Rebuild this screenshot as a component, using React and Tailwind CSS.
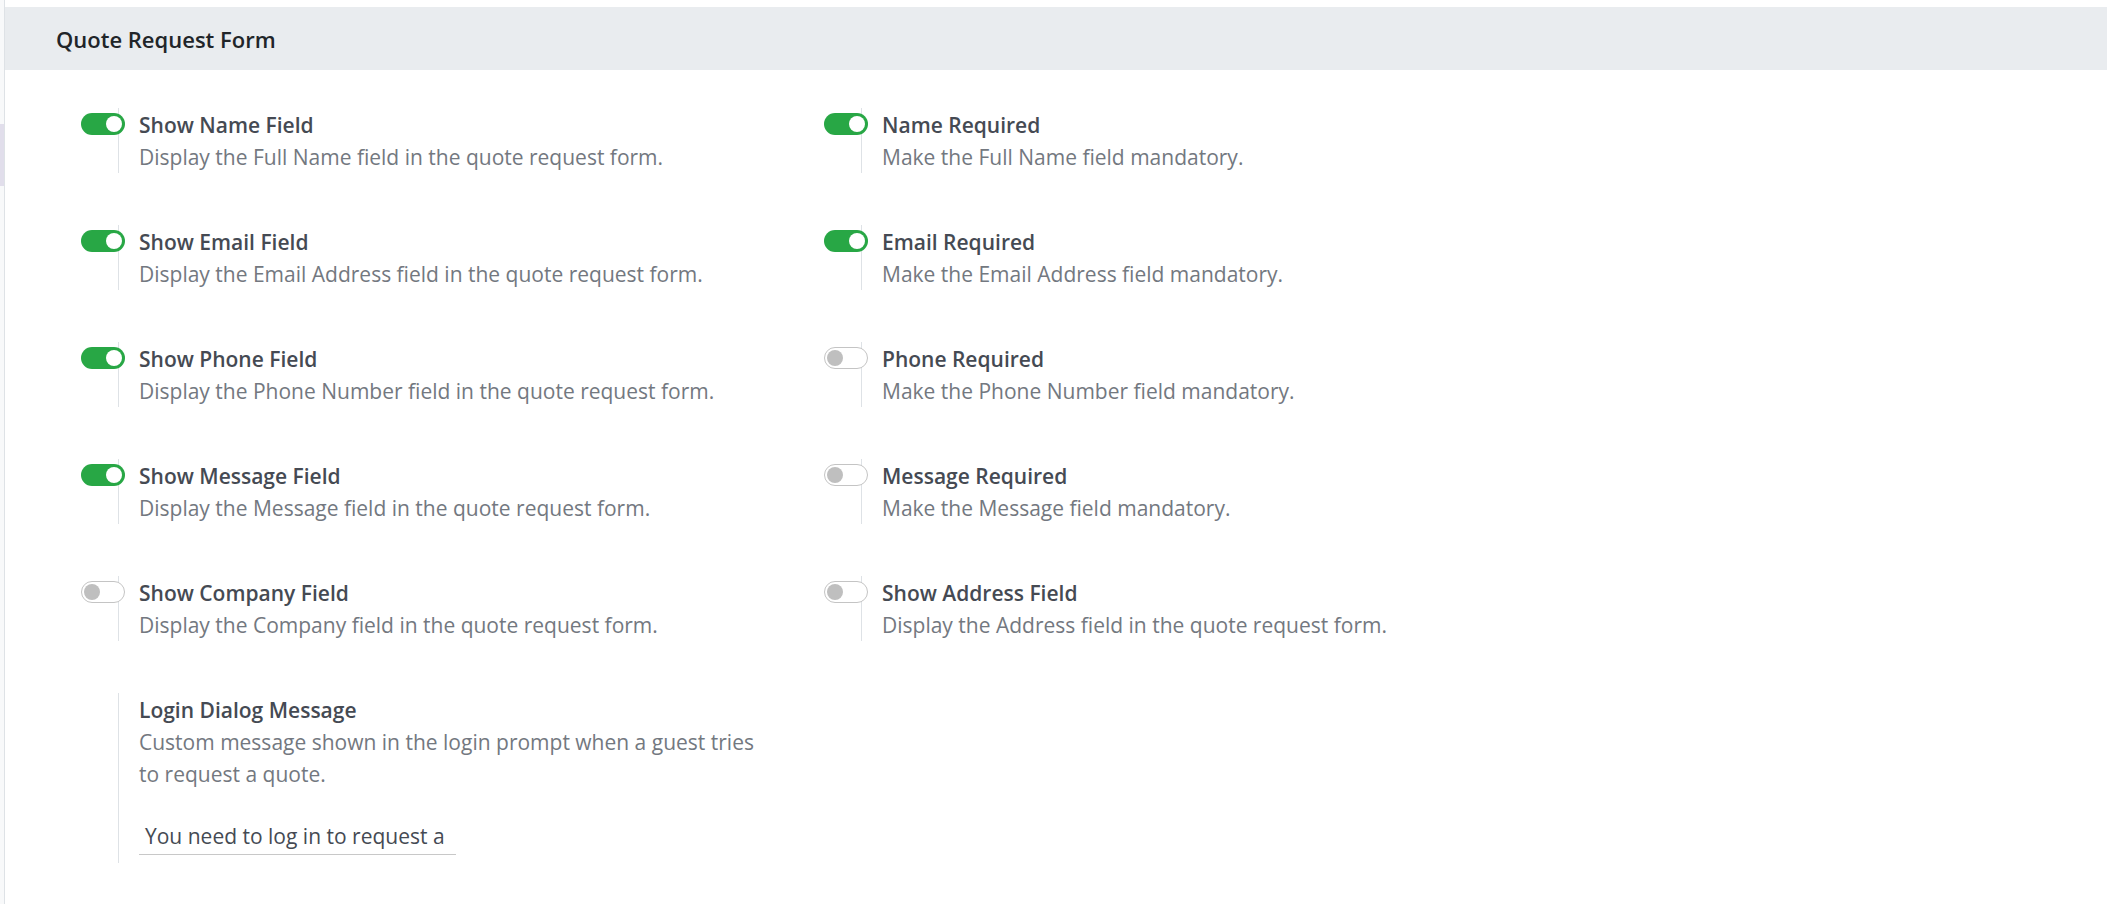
import React from "react";

function Toggle({ on }) {
  if (on) {
    return (
      <div className="relative z-10 flex h-[22px] w-[44px] items-center justify-end rounded-full bg-[#28a745] pr-[3px]">
        <div className="h-[16px] w-[16px] rounded-full bg-white" />
      </div>
    );
  }
  return (
    <div className="relative z-10 flex h-[22px] w-[44px] items-center justify-start rounded-full border border-[#c4c4c4] bg-white pl-[2px]">
      <div className="h-[16px] w-[16px] rounded-full bg-[#bfbfbf]" />
    </div>
  );
}

function Setting({ on, label, desc }) {
  return (
    <div className="flex">
      <div className="w-[37px] shrink-0 pt-[5px]">
        <Toggle on={on} />
      </div>
      <div className="flex-1 border-l border-[#dee2e6] pl-[20px] pr-[55px] pt-[1px] leading-[32.5px]">
        <div className="text-[21px] font-semibold text-[#454a53]">{label}</div>
        <div className="-mt-[1px] text-[21px] text-[#737880]">{desc}</div>
      </div>
    </div>
  );
}

const rows = [
  [
    { on: true, label: "Show Name Field", desc: "Display the Full Name field in the quote request form." },
    { on: true, label: "Name Required", desc: "Make the Full Name field mandatory." },
  ],
  [
    { on: true, label: "Show Email Field", desc: "Display the Email Address field in the quote request form." },
    { on: true, label: "Email Required", desc: "Make the Email Address field mandatory." },
  ],
  [
    { on: true, label: "Show Phone Field", desc: "Display the Phone Number field in the quote request form." },
    { on: false, label: "Phone Required", desc: "Make the Phone Number field mandatory." },
  ],
  [
    { on: true, label: "Show Message Field", desc: "Display the Message field in the quote request form." },
    { on: false, label: "Message Required", desc: "Make the Message field mandatory." },
  ],
  [
    { on: false, label: "Show Company Field", desc: "Display the Company field in the quote request form." },
    { on: false, label: "Show Address Field", desc: "Display the Address field in the quote request form." },
  ],
];

export default function App() {
  return (
    <div className="flex min-h-[904px] w-[2107px] overflow-hidden bg-white font-['Open_Sans',sans-serif]">
      <aside className="flex w-[5px] shrink-0 flex-col border-r border-[#dee2e6] bg-[#f8f9fa]">
        <div className="h-[124px]" />
        <div className="h-[62px] bg-[#e1deeb]" />
      </aside>
      <main className="flex-1 pt-[7px]">
        <div className="flex h-[63px] items-center bg-[#e9ecef] pl-[51px] pt-[2px]">
          <h2 className="text-[22px] font-semibold text-[#212529]">Quote Request Form</h2>
        </div>
        <div className="pl-[76px] pt-[38px]">
          <div className="grid grid-cols-[743px_743px] gap-y-[52px]">
            {rows.flatMap((r, i) =>
              r.map((s, j) => <Setting key={`${i}-${j}`} {...s} />)
            )}
            <div className="flex">
              <div className="w-[37px] shrink-0" />
              <div className="flex-1 border-l border-[#dee2e6] pb-[8px] pl-[20px] pr-[55px] pt-[1px] leading-[32.5px]">
                <div className="text-[21px] font-semibold text-[#454a53]">Login Dialog Message</div>
                <div className="-mt-[1px] text-[21px] text-[#737880]">
                  Custom message shown in the login prompt when a guest tries to request a quote.
                </div>
                <div className="mt-[28px] w-[317px] overflow-hidden whitespace-nowrap border-b border-[#c8c8c8] pb-[1px] pl-[6px] text-[21px] leading-[34px] text-[#454a53]">
                  You need to log in to request a
                </div>
              </div>
            </div>
          </div>
        </div>
      </main>
    </div>
  );
}
